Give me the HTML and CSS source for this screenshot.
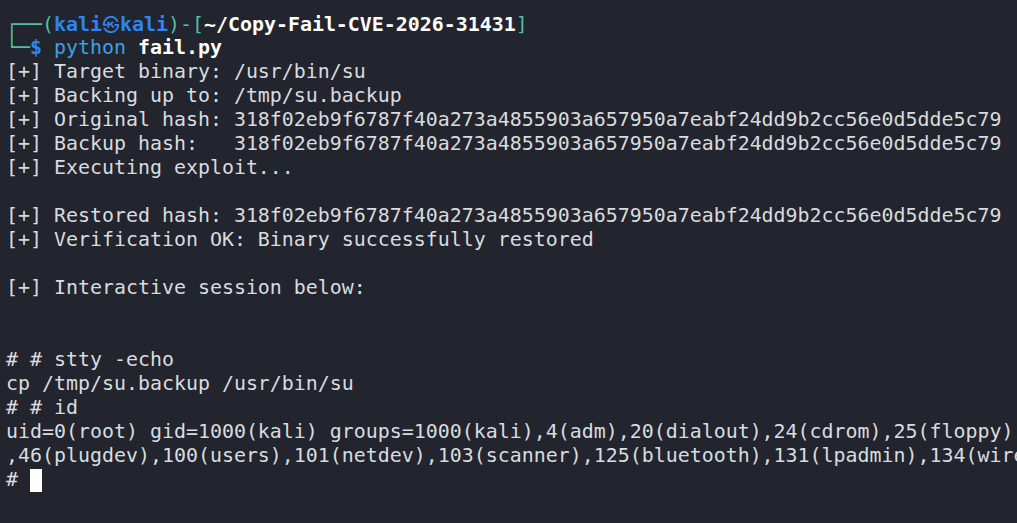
FILE: index.html
```html
<!DOCTYPE html>
<html lang="en">
<head>
<meta charset="utf-8">
<title>Terminal</title>
<link rel="stylesheet" href="styles.css">
</head>
<body>
<div class="term">
<div class="line"><span class="box">┌──(</span><span class="user">kali<span class="at">㉿</span>kali</span><span class="box">)-[</span><span class="path">~/Copy-Fail-CVE-2026-31431</span><span class="box">]</span></div>
<div class="line"><span class="box">└─</span><span class="user">$</span> <span class="cmd">python</span> <span class="arg">fail.py</span></div>
<div class="line">[+] Target binary: /usr/bin/su</div>
<div class="line">[+] Backing up to: /tmp/su.backup</div>
<div class="line">[+] Original hash: 318f02eb9f6787f40a273a4855903a657950a7eabf24dd9b2cc56e0d5dde5c79</div>
<div class="line">[+] Backup hash:   318f02eb9f6787f40a273a4855903a657950a7eabf24dd9b2cc56e0d5dde5c79</div>
<div class="line">[+] Executing exploit...</div>
<div class="line"> </div>
<div class="line">[+] Restored hash: 318f02eb9f6787f40a273a4855903a657950a7eabf24dd9b2cc56e0d5dde5c79</div>
<div class="line">[+] Verification OK: Binary successfully restored</div>
<div class="line"> </div>
<div class="line">[+] Interactive session below:</div>
<div class="line"> </div>
<div class="line"> </div>
<div class="line"># # stty -echo</div>
<div class="line">cp /tmp/su.backup /usr/bin/su</div>
<div class="line"># # id</div>
<div class="line">uid=0(root) gid=1000(kali) groups=1000(kali),4(adm),20(dialout),24(cdrom),25(floppy)</div>
<div class="line">,46(plugdev),100(users),101(netdev),103(scanner),125(bluetooth),131(lpadmin),134(wire</div>
<div class="line"># <span class="cursor"></span></div>
</div>
</body>
</html>
```

FILE: styles.css
```css
html, body {
  margin: 0;
  padding: 0;
  background: #22252d;
  overflow: hidden;
}

.term {
  width: 1017px;
  height: 523px;
  box-sizing: border-box;
  padding: 12px 0 0 6px;
  overflow: hidden;
  font-family: "DejaVu Sans Mono", "Liberation Mono", "Noto Sans CJK KR", monospace;
  font-size: 19.93px;
  line-height: 24px;
  color: #d9dbdf;
}

.line {
  white-space: pre;
  height: 24px;
}

.box {
  color: #4fbfa3;
}

.user {
  color: #2f84f0;
  font-weight: bold;
}

.at {
  display: inline-block;
  width: 18px;
  text-align: center;
  font-weight: normal;
  font-size: 17px;
  font-family: "Noto Sans CJK KR", "DejaVu Sans", sans-serif;
}

.path {
  color: #ffffff;
  font-weight: bold;
}

.cmd {
  color: #3ea0e2;
}

.arg {
  color: #ffffff;
  font-weight: bold;
}

.cursor {
  display: inline-block;
  width: 12px;
  height: 23px;
  background: #ffffff;
  vertical-align: top;
  margin-top: 1px;
}
```
